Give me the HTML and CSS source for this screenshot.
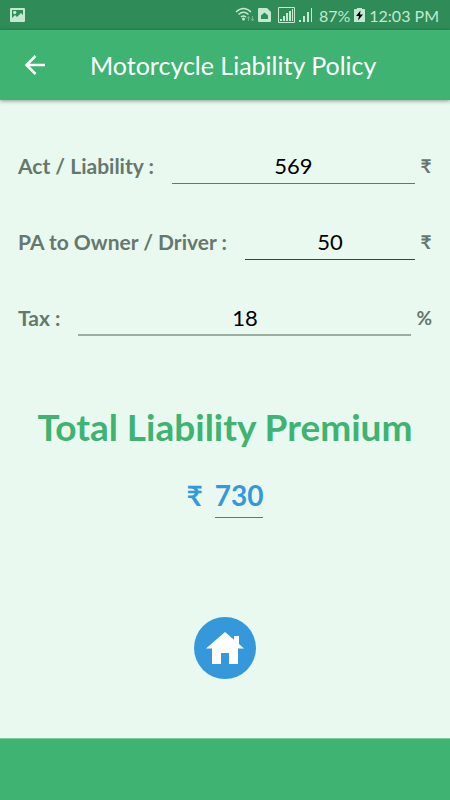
FILE: index.html
```html
<!DOCTYPE html>
<html lang="en">
<head>
<meta charset="utf-8">
<meta name="viewport" content="width=device-width, initial-scale=1">
<title>Motorcycle Liability Policy</title>
<link rel="stylesheet" href="styles.css">
</head>
<body>
<div class="status">
  <svg width="15" height="14" viewBox="0 0 15 14" aria-hidden="true"><path fill="#c3e9d0" fill-rule="evenodd" d="M1 0h13a1 1 0 0 1 1 1v12a1 1 0 0 1-1 1H1a1 1 0 0 1-1-1V1a1 1 0 0 1 1-1zM2 2v8l3-3 2 2 4-4 2 2V2z"/><circle cx="4.700" cy="4.500" r="1.700" fill="#c3e9d0"/></svg>
  <div class="status-right">
    <svg class="signals" width="80" height="18" viewBox="0 0 80 18" aria-hidden="true">
      <g fill="none" stroke="#c3e9d0" stroke-width="1.500"><path d="M1 6Q8.500-1 16 6M3.500 8.500Q8.500 4 13.500 8.500M6 11Q8.500 9 11 11"/><path stroke="#6fb88b" stroke-width="1" d="M13.500 15V11M12 12.500l1.500-2 1.500 2M17.500 10v4.500M16 13l1.500 2 1.500-2"/><path stroke-width="1" d="M43.500 1.500h16v15h-16z"/></g>
      <circle cx="8.500" cy="13" r="1.500" fill="#c3e9d0"/>
      <path fill="#c3e9d0" fill-rule="evenodd" d="M24 2h8l4 4v9a1 1 0 0 1-1 1H24a1 1 0 0 1-1-1V3a1 1 0 0 1 1-1zM26 13h7v-3.500l-3.500-3-3.500 3z"/>
      <path fill="#c3e9d0" d="M45 13h2v2h-2zM48 10h2v5h-2zM51 7h2v8h-2zM54 5h2v10h-2zM57 3h1v12h-1zM64 14h2v2h-2zM68 10h2v6h-2zM72 6h2v10h-2zM76 2h1v14h-1z"/>
    </svg>
    <span>87%</span>
    <svg width="11" height="14" viewBox="0 0 11 14" aria-hidden="true"><path fill="#c3e9d0" d="M3 0h5v1h2a1 1 0 0 1 1 1v12H0V2a1 1 0 0 1 1-1h2z"/><path d="M6.500 2.500L2 8h3l-1 4.500L9 6.500H6z"/></svg>
    <span>12:03 PM</span>
  </div>
</div>
<header class="bar">
  <button class="back" type="button" aria-label="Back"><svg width="20" height="20" viewBox="0 0 20 20" aria-hidden="true"><path fill="none" stroke="#fff" stroke-width="2.500" d="M20 10H2M10.500 1L1.500 10l9 9"/></svg></button>
  <h1>Motorcycle Liability Policy</h1>
</header>
<main>
  <form>
    <div class="row"><label for="act">Act / Liability :</label><input id="act" type="text" inputmode="numeric" value="569"><span class="unit">₹</span></div>
    <div class="row driver"><label for="pa">PA to Owner / Driver :</label><input id="pa" type="text" inputmode="numeric" value="50"><span class="unit">₹</span></div>
    <div class="row tax"><label for="tax">Tax :</label><input id="tax" type="text" inputmode="numeric" value="18"><span class="unit">%</span></div>
  </form>
  <h2>Total Liability Premium</h2>
  <p class="total"><span>₹</span><output>730</output></p>
  <button class="home" type="button" aria-label="Home"><svg width="38" height="34" viewBox="0 0 38 34" aria-hidden="true"><path fill="#fff" d="M19 1L0 17.500h6V33h9V22h8v11h9V17.500h6l-5-4.400V5h-5v3.800z"/></svg></button>
</main>
<footer></footer>
</body>
</html>
```
FILE: styles.css
```css
* { box-sizing: border-box; }
body {
  margin: 0;
  min-height: 100vh;
  display: flex;
  flex-direction: column;
  background: #e9f9f0;
  font-family: Lato, "Noto Sans", sans-serif;
}
button { border: 0; padding: 0; cursor: pointer; }
.status {
  height: 30px;
  padding: 0 11px 0 10px;
  display: flex;
  align-items: center;
  justify-content: space-between;
  background: #2f8b57;
  color: #c3e9d0;
  font-size: 16px;
}
.status-right { display: flex; align-items: center; gap: 4px; }
.bar {
  height: 70px;
  padding: 0 24px;
  display: flex;
  align-items: center;
  gap: 44px;
  background: #3eb372;
  box-shadow: 0 1px 4px #0006;
  color: #fff;
}
.back { display: flex; padding: 1px; background: none; }
h1 { margin: 0; font-size: 25px; font-weight: 400; white-space: nowrap; }
main {
  flex: 1;
  padding: 29px 18px 0;
  display: flex;
  flex-direction: column;
  align-items: center;
}
form { width: 100%; }
.row {
  height: 76px;
  display: flex;
  align-items: center;
  color: #66776d;
  font-size: 21px;
  line-height: 24px;
  font-weight: 700;
}
.row label,
.unit { padding-bottom: 2px; }
.row label { white-space: nowrap; }
.row input {
  flex: 1;
  min-width: 0;
  height: 34px;
  margin: 0 5px 0 18px;
  padding: 0 0 2px;
  border: 0;
  border-bottom: 1px solid #66776d;
  background: none;
  color: #000;
  font: 400 22px Lato, sans-serif;
  text-align: center;
}
.driver input { border-color: #34473c; }
.tax input { border-bottom: 2px solid #9aada2; }
.unit { min-width: 12px; font-size: 19px; text-align: center; }
h2 {
  margin: 48px 0 0;
  color: #3eb372;
  font-size: 37px;
  line-height: 44px;
  font-weight: 700;
  white-space: nowrap;
}
.total {
  margin: 24px 0 0;
  display: flex;
  gap: 12px;
  color: #3498db;
  font-size: 28px;
  line-height: 44px;
  font-weight: 700;
}
.total output { border-bottom: 1px solid #66776d; }
.home {
  width: 62px;
  height: 62px;
  margin-top: 99px;
  display: grid;
  place-items: center;
  border-radius: 50%;
  background: #3498db;
}
footer { height: 62px; background: #3eb372; border-top: 1px solid #7bc99d; }
```
